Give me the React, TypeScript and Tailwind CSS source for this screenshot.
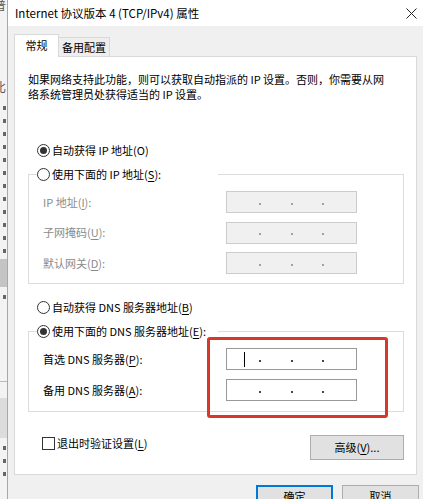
import type { ReactNode } from 'react'

const FONT = "font-['Noto_Sans_CJK_SC','Noto_Sans',sans-serif]"

function U({ children }: { children: ReactNode }) {
  return <span className="underline underline-offset-[2px]">{children}</span>
}

function Radio({ checked }: { checked?: boolean }) {
  return (
    <span className="flex h-[13px] w-[13px] shrink-0 items-center justify-center rounded-full border border-[#333333] bg-white">
      {checked && <span className="h-[7px] w-[7px] rounded-full bg-[#333333]" />}
    </span>
  )
}

function IpBox({ disabled, cursor }: { disabled?: boolean; cursor?: boolean }) {
  const dot = disabled ? 'bg-[#a0a0a0]' : 'bg-[#444444]'
  return (
    <div
      className={
        disabled
          ? 'flex h-[22px] w-[131px] items-center border border-[#cccccc] bg-[#f0f0f0]'
          : 'flex h-[22px] w-[131px] items-center border border-[#999999] bg-white'
      }
    >
      <span className="flex h-full w-[32px] items-center pl-[17px]">
        {cursor && <span className="h-[15px] w-px bg-black" />}
      </span>
      <span className={`mt-[3px] h-[2px] w-[2px] ${dot}`} />
      <span className="w-[30px]" />
      <span className={`mt-[3px] h-[2px] w-[2px] ${dot}`} />
      <span className="w-[29px]" />
      <span className={`mt-[3px] h-[2px] w-[2px] ${dot}`} />
    </div>
  )
}

function FieldRow({ label, disabled, cursor }: { label: ReactNode; disabled?: boolean; cursor?: boolean }) {
  return (
    <div className="flex items-center">
      <span className={`ml-[6px] w-[183px] ${disabled ? 'text-[#8a8a8a]' : 'text-black'}`}>{label}</span>
      <IpBox disabled={disabled} cursor={cursor} />
    </div>
  )
}

function Marks({ n }: { n: number }) {
  return (
    <div className="flex flex-col gap-[9px] pl-[3px]">
      {Array.from({ length: n }).map((_, i) => (
        <span key={i} className="h-[4px] w-[3px] bg-[#666666]" />
      ))}
    </div>
  )
}

export default function App() {
  return (
    <div className={`relative flex h-[499px] w-[423px] overflow-hidden bg-white text-[11px] leading-[15px] text-black ${FONT}`}>
      {/* window behind */}
      <div className="flex w-[8px] shrink-0 flex-col overflow-hidden border-r border-[#a8a8a8] bg-[#f3f3f3] text-[12px] leading-[14px] text-[#555555]">
        <span className="-ml-[6px] -mt-[2px]">普</span>
        <span className="-ml-[6px] mt-[68px]">比</span>
        <div className="mt-[12px]">
          <Marks n={12} />
        </div>
        <div className="mt-[6px] h-[28px] bg-[#c4c4c4]" />
        <div className="mt-[8px]">
          <Marks n={1} />
        </div>
        <div className="mt-[82px] h-px bg-[#bbbbbb]" />
        <div className="mt-[16px] h-[40px] bg-[#dcdcdc]" />
        <div className="mt-[8px]">
          <Marks n={3} />
        </div>
      </div>

      {/* dialog */}
      <div className="flex flex-1 flex-col">
        <div className="flex h-[26px] shrink-0 items-center justify-between bg-white pl-[7px] pr-[6px]">
          <span className="text-[11.5px]">Internet 协议版本 4 (TCP/IPv4) 属性</span>
          <svg width="11" height="11" viewBox="0 0 11 11" className="text-[#222222]">
            <path d="M0.5 0.5L10.5 10.5M10.5 0.5L0.5 10.5" stroke="currentColor" strokeWidth="1" />
          </svg>
        </div>

        <div className="flex-1 bg-[#f0f0f0] pl-[6px] pt-[8px]">
          {/* tabs */}
          <div className="relative z-10 flex h-[22px] items-end">
            <div className="-mb-px flex h-[23px] w-[45px] items-center justify-center border border-b-0 border-[#d9d9d9] bg-white pb-[1px]">
              常规
            </div>
            <div className="flex h-[19px] w-[51px] items-center justify-center border-r border-t border-[#d9d9d9] bg-[#eeeeee]">
              备用配置
            </div>
          </div>

          {/* panel */}
          <div className="w-[403px] border border-[#d9d9d9] bg-white pb-[14px] pt-[15px]">
            <p className="pl-[13px]">
              如果网络支持此功能，则可以获取自动指派的 IP 设置。否则，你需要从网
              <br />
              络系统管理员处获得适当的 IP 设置。
            </p>

            <div className="ml-[22px] mt-[41px] flex h-[15px] items-center gap-[2px]">
              <Radio checked />
              <span>自动获得 IP 地址(O)</span>
            </div>

            <fieldset className="ml-[13px] mt-[9px] w-[376px] border border-[#dcdcdc] pb-[9px] pl-[8px]">
              <legend className="flex h-[15px] w-[181px] items-center gap-[2px]">
                <Radio />
                <span>
                  使用下面的 IP 地址(<U>S</U>):
                </span>
              </legend>
              <div className="mt-[9px] flex flex-col gap-[8.5px]">
                <FieldRow disabled label={<>IP 地址(<U>I</U>):</>} />
                <FieldRow disabled label={<>子网掩码(<U>U</U>):</>} />
                <FieldRow disabled label={<>默认网关(<U>D</U>):</>} />
              </div>
            </fieldset>

            <div className="ml-[22px] mt-[16px] flex h-[15px] items-center gap-[2px]">
              <Radio />
              <span>
                自动获得 DNS 服务器地址(<U>B</U>)
              </span>
            </div>

            <fieldset className="ml-[13px] mt-[9px] w-[376px] border border-[#dcdcdc] pb-[10px] pl-[8px]">
              <legend className="flex h-[15px] w-[181px] items-center gap-[2px]">
                <Radio checked />
                <span>
                  使用下面的 DNS 服务器地址(<U>E</U>):
                </span>
              </legend>
              <div className="mt-[9px] flex flex-col gap-[9px]">
                <FieldRow cursor label={<>首选 DNS 服务器(<U>P</U>):</>} />
                <FieldRow label={<>备用 DNS 服务器(<U>A</U>):</>} />
              </div>
            </fieldset>

            <div className="ml-[13px] mt-[23px] flex w-[376px] items-start justify-between">
              <div className="ml-[14px] mt-[2px] flex h-[13px] items-center gap-[2px]">
                <span className="h-[13px] w-[13px] border border-[#333333] bg-white" />
                <span>
                  退出时验证设置(<U>L</U>)
                </span>
              </div>
              <button className="flex h-[25px] w-[94px] items-center justify-center border border-[#adadad] bg-[#e1e1e1]">
                高级(<U>V</U>)...
              </button>
            </div>
          </div>

          {/* dialog buttons */}
          <div className="mt-[10px] flex justify-end gap-[9px] pr-[4px]">
            <button className="flex h-[23px] w-[77px] items-center justify-center border-2 border-[#0078d7] bg-[#e1e1e1]">
              确定
            </button>
            <button className="flex h-[23px] w-[77px] items-center justify-center border border-[#adadad] bg-[#e1e1e1]">
              取消
            </button>
          </div>
        </div>
      </div>

      {/* annotation */}
      <div className="absolute left-[207px] top-[337px] h-[81px] w-[181px] rounded-[3px] border-[3px] border-[#d6382b]" />
    </div>
  )
}
